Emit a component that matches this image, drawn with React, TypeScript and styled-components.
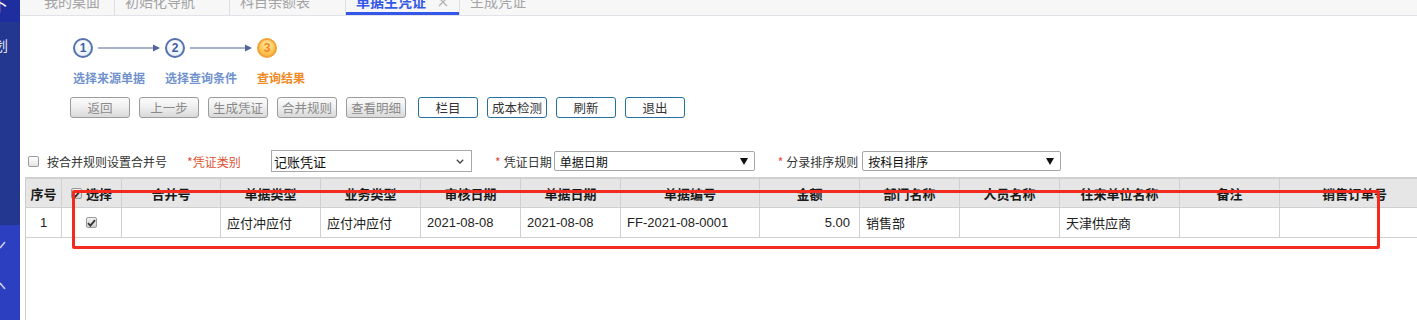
import React from 'react';
import styled, { createGlobalStyle } from 'styled-components';

const GlobalStyle = createGlobalStyle`
  html, body {
    margin: 0;
    padding: 0;
    background: #fff;
  }
  body {
    font-family: "Liberation Sans", "Noto Sans CJK SC", sans-serif;
    font-size: 12px;
    color: #333;
    overflow: hidden;
  }
`;

const Page = styled.div`
  position: relative;
  display: flex;
  width: 1417px;
  height: 320px;
  overflow: hidden;
`;

/* ---------- sidebar ---------- */

const Sidebar = styled.div`
  width: 20px;
  flex-shrink: 0;
  display: flex;
  flex-direction: column;
  overflow: hidden;
  background: #243790;
  color: #fff;
`;

const SideHead = styled.div`
  height: 22px;
  background: #1f2e9e;
  overflow: hidden;
  font-size: 17px;
  font-family: "Noto Sans CJK SC", sans-serif;
  line-height: 16px;
  & span {
    display: block;
    margin: -4px 0 0 -9px;
  }
`;

const SideMenu = styled.div`
  flex: 1;
  padding-top: 15px;
  overflow: hidden;
  & span {
    display: block;
    margin-left: -6px;
    font-size: 14px;
    line-height: 16px;
    font-family: "Noto Sans CJK SC", sans-serif;
    color: #e6e9f6;
  }
`;

const SideFoot = styled.div`
  height: 95px;
  background: #2b3fc0;
  display: flex;
  flex-direction: column;
  gap: 33px;
  padding-top: 16px;
  box-sizing: border-box;
`;

/* ---------- main ---------- */

const Main = styled.div`
  flex: 1;
  min-width: 0;
  display: flex;
  flex-direction: column;
`;

const TabBar = styled.div`
  height: 15px;
  flex-shrink: 0;
  display: flex;
  padding-left: 14px;
  background: #f7f7f8;
  border-bottom: 1px solid #e2e3e8;
  overflow: hidden;
  font-family: "Noto Sans CJK SC", sans-serif;
`;

const Tab = styled.div<{ $width: number; $active?: boolean; $last?: boolean }>`
  width: ${(p) => p.$width}px;
  height: 15px;
  box-sizing: border-box;
  display: flex;
  align-items: flex-start;
  gap: 12px;
  padding-left: 10px;
  border-right: ${(p) => (p.$last ? 'none' : '1px solid #dedee2')};
  box-shadow: ${(p) => (p.$active ? 'inset 0 -3px 0 #3557e8' : 'none')};
  color: ${(p) => (p.$active ? '#3557e8' : '#a3a3a3')};
  font-weight: ${(p) => (p.$active ? 'bold' : 'normal')};
  font-size: 14px;
  line-height: 16px;
  white-space: nowrap;
  & > span {
    margin-top: -7px;
  }
  & > svg {
    margin-top: -3px;
  }
`;

const Body = styled.div`
  flex: 1;
  min-height: 0;
  display: flex;
  flex-direction: column;
  padding-left: 5px;
  font-family: "Noto Sans CJK SC", sans-serif;
`;

/* ---------- wizard ---------- */

const Wizard = styled.div`
  display: flex;
  margin: 22px 0 0 48px;
`;

const Step = styled.div`
  width: 92px;
  display: flex;
  flex-direction: column;
`;

const StepTop = styled.div`
  display: flex;
  align-items: center;
  height: 20px;
  gap: 5px;
`;

const Circle = styled.div<{ $current?: boolean }>`
  width: 20px;
  height: 20px;
  box-sizing: border-box;
  border-radius: 50%;
  border: 2px solid ${(p) => (p.$current ? '#f1a236' : '#5473ad')};
  background: ${(p) =>
    p.$current
      ? 'radial-gradient(circle at 50% 30%, #ffeaa6 0%, #fcc659 55%, #f4a42d 100%)'
      : 'radial-gradient(circle at 45% 30%, #ffffff 0%, #f2f5fb 55%, #d6e0f1 100%)'};
  color: ${(p) => (p.$current ? '#ee8a1c' : '#3c5ea6')};
  font-family: "Liberation Sans", sans-serif;
  font-weight: bold;
  font-size: 12px;
  line-height: 16px;
  text-align: center;
`;

const StepLabel = styled.div<{ $current?: boolean }>`
  margin-top: 13px;
  font-size: 12px;
  line-height: 14px;
  font-weight: bold;
  color: ${(p) => (p.$current ? '#f08a24' : '#7191cd')};
  white-space: nowrap;
`;

/* ---------- toolbar ---------- */

const Toolbar = styled.div`
  display: flex;
  gap: 9px;
  margin: 12px 0 0 45px;
`;

const Button = styled.div<{ $disabled?: boolean; $push?: boolean }>`
  width: 60px;
  height: 21px;
  box-sizing: border-box;
  border-radius: 3px;
  margin-left: ${(p) => (p.$push ? '3px' : '0')};
  border: 1px solid ${(p) => (p.$disabled ? '#9b9b9b' : '#22719f')};
  background: ${(p) =>
    p.$disabled ? 'linear-gradient(#fbfbfb, #f0f0f0 45%, #d9d9d9)' : '#fff'};
  color: ${(p) => (p.$disabled ? '#8a8a8a' : '#333')};
  font-size: 12.5px;
  line-height: 19px;
  text-align: center;
`;

/* ---------- filter row ---------- */

const FilterRow = styled.div`
  display: flex;
  align-items: center;
  height: 22px;
  margin: 32px 0 0 3px;
  font-size: 12px;
  color: #333;
  white-space: nowrap;
`;

const CheckBox = styled.span<{ $checked?: boolean }>`
  width: 11px;
  height: 11px;
  flex-shrink: 0;
  box-sizing: border-box;
  display: inline-flex;
  align-items: center;
  justify-content: center;
  border: 1px solid #9a9a9a;
  border-radius: 2px;
  background: ${(p) =>
    p.$checked ? 'linear-gradient(#f2f2f2, #cfcfcf)' : 'linear-gradient(#ffffff, #e4e4e4)'};
`;

const Field = styled.div<{ $gap: number; $width?: number; $accent?: boolean }>`
  display: flex;
  align-items: center;
  margin-left: ${(p) => p.$gap}px;
  width: ${(p) => (p.$width ? `${p.$width}px` : 'auto')};
  color: ${(p) => (p.$accent ? '#e0522f' : '#333')};
`;

const Star = styled.span<{ $space?: boolean }>`
  color: #e8483a;
  margin-right: ${(p) => (p.$space ? '3px' : '0')};
`;

const SelectBox = styled.div<{ $native?: boolean; $width: number; $offset?: number }>`
  width: ${(p) => p.$width}px;
  height: ${(p) => (p.$native ? '22px' : '20px')};
  box-sizing: border-box;
  display: flex;
  align-items: center;
  justify-content: space-between;
  padding: ${(p) => (p.$native ? '0 7px 0 2px' : '0 6px 0 5px')};
  border: 1px solid ${(p) => (p.$native ? '#a9a9a9' : '#a6a6a6')};
  border-radius: ${(p) => (p.$native ? '0' : '2px')};
  background: #fff;
  color: #111;
  font-size: ${(p) => (p.$native ? '13px' : '12px')};
  margin-left: ${(p) => p.$offset ?? 0}px;
`;

const Triangle = styled.span`
  width: 0;
  height: 0;
  border-left: 4px solid transparent;
  border-right: 4px solid transparent;
  border-top: 7px solid #111;
`;

/* ---------- grid ---------- */

const GridWrap = styled.div`
  flex: 1;
  margin-top: 5px;
  border-left: 1px solid #cdcdcd;
  overflow: hidden;
`;

const Table = styled.table`
  border-collapse: collapse;
  table-layout: fixed;
  width: 1404px;
  margin-left: -1px;
  font-size: 13px;
`;

const HeadCell = styled.th`
  height: 28px;
  padding: 0;
  background: #e6e6e6;
  border: 1px solid #d0d0d0;
  border-top: 2px solid #d0d0d0;
  color: #1a1a1a;
  font-weight: bold;
  text-align: center;
  white-space: nowrap;
`;

const HeadInner = styled.span`
  display: inline-flex;
  align-items: center;
  gap: 4px;
`;

const Cell = styled.td<{ $align?: string }>`
  height: 28px;
  padding: ${(p) => (p.$align === 'right' ? '0 9px 1px 6px' : '0 6px 1px')};
  border: 1px solid #d0d0d0;
  text-align: ${(p) => p.$align || 'left'};
  font-family: "Liberation Sans", "Noto Sans CJK SC", sans-serif;
  color: #222;
  white-space: nowrap;
  overflow: hidden;
`;

const Highlight = styled.div`
  position: absolute;
  left: 72px;
  top: 190px;
  width: 1308px;
  height: 59px;
  box-sizing: border-box;
  border: 3px solid #f42a1f;
  border-radius: 2px;
  pointer-events: none;
`;

type Column = {
  key: string;
  title: string;
  width: number;
  align?: 'left' | 'center' | 'right';
};

const columns: Column[] = [
  { key: 'seq', title: '序号', width: 36, align: 'center' },
  { key: 'sel', title: '选择', width: 60, align: 'center' },
  { key: 'merge', title: '合并号', width: 99 },
  { key: 'billType', title: '单据类型', width: 100 },
  { key: 'bizType', title: '业务类型', width: 100 },
  { key: 'auditDate', title: '审核日期', width: 100 },
  { key: 'billDate', title: '单据日期', width: 100 },
  { key: 'billNo', title: '单据编号', width: 139 },
  { key: 'amount', title: '金额', width: 100, align: 'right' },
  { key: 'dept', title: '部门名称', width: 100 },
  { key: 'person', title: '人员名称', width: 100 },
  { key: 'partner', title: '往来单位名称', width: 120 },
  { key: 'remark', title: '备注', width: 100 },
  { key: 'order', title: '销售订单号', width: 150 },
];

const rows: Record<string, string>[] = [
  {
    seq: '1',
    merge: '',
    billType: '应付冲应付',
    bizType: '应付冲应付',
    auditDate: '2021-08-08',
    billDate: '2021-08-08',
    billNo: 'FF-2021-08-0001',
    amount: '5.00',
    dept: '销售部',
    person: '',
    partner: '天津供应商',
    remark: '',
    order: '',
  },
];

const tabs = [
  { label: '我的桌面', width: 81 },
  { label: '初始化导航', width: 115 },
  { label: '科目余额表', width: 116 },
  { label: '单据生凭证', width: 114, active: true },
  { label: '生成凭证', width: 120, last: true },
];

const steps = ['选择来源单据', '选择查询条件', '查询结果'];

const buttons = [
  { label: '返回', disabled: true },
  { label: '上一步', disabled: true },
  { label: '生成凭证', disabled: true },
  { label: '合并规则', disabled: true },
  { label: '查看明细', disabled: true },
  { label: '栏目', push: true },
  { label: '成本检测' },
  { label: '刷新' },
  { label: '退出' },
];

const Tick = () => (
  <svg width="9" height="8" viewBox="0 0 9 8">
    <path d="M1 4.2 L3.4 6.6 L8 1.2" fill="none" stroke="#333" strokeWidth="1.8" />
  </svg>
);

const Arrow = () => (
  <svg width="62" height="8" viewBox="0 0 62 8">
    <line x1="0" y1="4" x2="56" y2="4" stroke="#4f6796" strokeWidth="1" />
    <path d="M55 0.5 L62 4 L55 7.5 Z" fill="#4f6796" />
  </svg>
);

const NativeChevron = () => (
  <svg width="8" height="5" viewBox="0 0 8 5">
    <path d="M0.8 0.8 L4 4 L7.2 0.8" fill="none" stroke="#444" strokeWidth="1.3" />
  </svg>
);

const CloseIcon = () => (
  <svg width="10" height="10" viewBox="0 0 10 10">
    <path d="M1 1 L9 9 M9 1 L1 9" stroke="#b0b0b0" strokeWidth="1.2" />
  </svg>
);

const SideChevron = ({ up }: { up?: boolean }) => (
  <svg width="6" height="8" viewBox="0 0 6 8">
    <path
      d={up ? 'M0 1 L5 7' : 'M0 7 L5 1'}
      stroke="#c9cff0"
      strokeWidth="1.6"
      fill="none"
    />
  </svg>
);

export default function App() {
  return (
    <>
      <GlobalStyle />
      <Page>
        <Sidebar>
          <SideHead>
            <span>下</span>
          </SideHead>
          <SideMenu>
            <span>划</span>
          </SideMenu>
          <SideFoot>
            <SideChevron />
            <SideChevron up />
          </SideFoot>
        </Sidebar>

        <Main>
          <TabBar>
            {tabs.map((t) => (
              <Tab key={t.label} $width={t.width} $active={t.active} $last={t.last}>
                <span>{t.label}</span>
                {t.active && <CloseIcon />}
              </Tab>
            ))}
          </TabBar>

          <Body>
            <Wizard>
              {steps.map((s, i) => {
                const current = i === steps.length - 1;
                return (
                  <Step key={s}>
                    <StepTop>
                      <Circle $current={current}>{i + 1}</Circle>
                      {!current && <Arrow />}
                    </StepTop>
                    <StepLabel $current={current}>{s}</StepLabel>
                  </Step>
                );
              })}
            </Wizard>

            <Toolbar>
              {buttons.map((b) => (
                <Button key={b.label} $disabled={b.disabled} $push={b.push}>
                  {b.label}
                </Button>
              ))}
            </Toolbar>

            <FilterRow>
              <CheckBox />
              <Field $gap={8}>按合并规则设置合并号</Field>
              <Field $gap={20} $width={84} $accent>
                <Star>*</Star>凭证类别
              </Field>
              <SelectBox $native $width={201}>
                记账凭证
                <NativeChevron />
              </SelectBox>
              <Field $gap={23}>
                <Star $space>*</Star>凭证日期
              </Field>
              <SelectBox $width={201} $offset={2}>
                单据日期
                <Triangle />
              </SelectBox>
              <Field $gap={23}>
                <Star $space>*</Star>分录排序规则
              </Field>
              <SelectBox $width={199} $offset={4}>
                按科目排序
                <Triangle />
              </SelectBox>
            </FilterRow>

            <GridWrap>
              <Table>
                <colgroup>
                  {columns.map((c) => (
                    <col key={c.key} style={{ width: c.width }} />
                  ))}
                </colgroup>
                <thead>
                  <tr>
                    {columns.map((c) => (
                      <HeadCell key={c.key}>
                        {c.key === 'sel' ? (
                          <HeadInner>
                            <CheckBox $checked>
                              <Tick />
                            </CheckBox>
                            {c.title}
                          </HeadInner>
                        ) : (
                          c.title
                        )}
                      </HeadCell>
                    ))}
                  </tr>
                </thead>
                <tbody>
                  {rows.map((r, idx) => (
                    <tr key={idx}>
                      {columns.map((c) => (
                        <Cell key={c.key} $align={c.align}>
                          {c.key === 'sel' ? (
                            <CheckBox $checked>
                              <Tick />
                            </CheckBox>
                          ) : (
                            r[c.key]
                          )}
                        </Cell>
                      ))}
                    </tr>
                  ))}
                </tbody>
              </Table>
            </GridWrap>
          </Body>
        </Main>

        <Highlight />
      </Page>
    </>
  );
}
